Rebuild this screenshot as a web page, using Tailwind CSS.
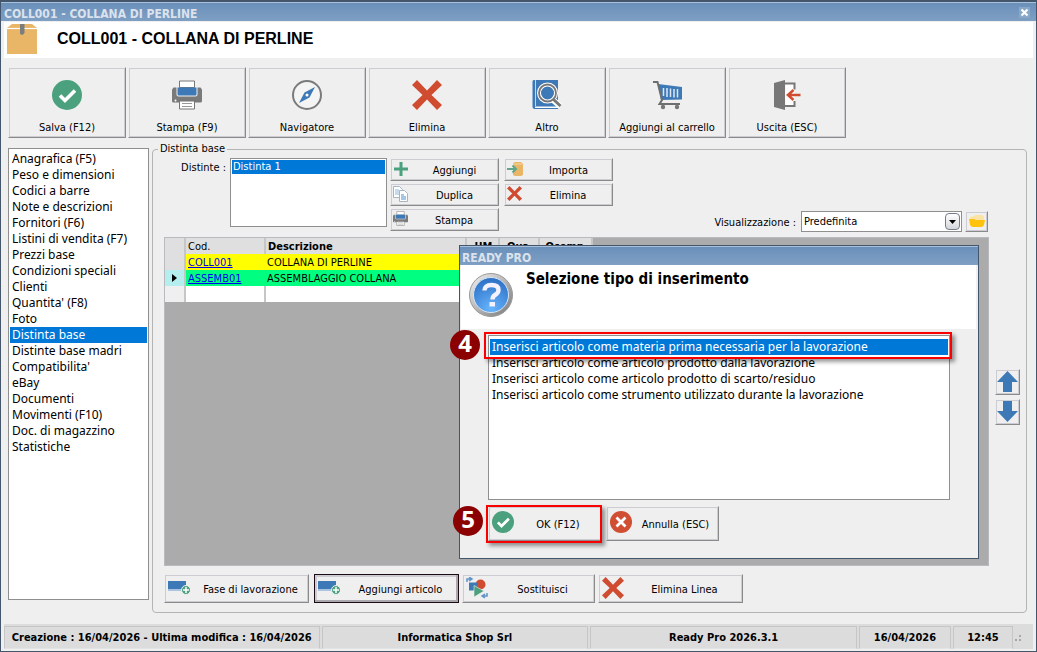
<!DOCTYPE html>
<html lang="it">
<head>
<meta charset="utf-8">
<title>COLL001 - COLLANA DI PERLINE</title>
<script src="https://cdn.jsdelivr.net/npm/@tailwindcss/browser@4"></script>
</head>
<body class="relative flex h-screen flex-col overflow-hidden border border-t-2 border-[#44566b] bg-[#efefef] font-['DejaVu_Sans_Condensed','DejaVu_Sans',sans-serif] text-[11px] leading-4 text-black">

<svg class="hidden" aria-hidden="true">
  <symbol id="check" viewBox="0 0 30 30"><circle cx="15" cy="15" r="15" fill="#4ba07e"/><path d="M8 15.500l5 5L23 10.500" fill="none" stroke="#fff" stroke-width="3.600"/></symbol>
  <symbol id="cancel" viewBox="0 0 22 22"><circle cx="11" cy="11" r="11" fill="#d04e32"/><path d="M6.500 6.500l9 9M15.500 6.500l-9 9" stroke="#fff" stroke-width="2.800"/></symbol>
  <symbol id="cross" viewBox="0 0 30 30"><path d="M5 0L15 10.500 25 0l5 5-10.500 10L30 25l-5 5-10-10.500L5 30l-5-5 10.500-10L0 5z" fill="#d04c31"/></symbol>
  <symbol id="printer" viewBox="0 0 30 29"><path d="M1.500 7h27L30 9v11.500q0 1.500-1.500 1.500h-27Q0 22 0 20.500V9z" fill="#7a7a7a"/><path d="M4.500 6h21v8q0 2-2 2h-17q-2 0-2-2z" fill="#efefef"/><path d="M7.500.500h15V7h-15z" fill="#fff" stroke="#777"/><path d="M5.500 7h19v7q0 1-1 1h-17q-1 0-1-1z" fill="#3d79b7"/><path d="M7.500 20.500h15v8h-15z" fill="#fff" stroke="#777"/><path d="M10 23h10M10 26h10" stroke="#999"/><circle cx="3.500" cy="20" r="1" fill="#fff"/></symbol>
  <symbol id="step" viewBox="0 0 22 14"><path d="M0 0h18v8H0z" fill="#3d79b7"/><path d="M0 8h14v2H0z" fill="#a9c3e0"/><circle cx="18" cy="9" r="4.500" fill="#4ba07e" stroke="#efefef"/><path d="M18 6v6M15 9h6" stroke="#fff" stroke-width="1.500"/></symbol>
</svg>

<header class="flex h-[19px] shrink-0 items-center justify-between border-t border-[#a8c0dc] bg-linear-to-b from-[#6a90ba] to-[#7f9fc4] pr-1.5 pl-[3px]">
  <span class="pt-1 text-xs leading-4 font-bold text-[#dbe2ec]">COLL001 - COLLANA DI PERLINE</span>
  <button aria-label="Chiudi" class="flex size-[11px] items-center justify-center bg-[#89a8c9]"><svg class="size-[9px]" viewBox="0 0 9 9"><path d="M1.500 1.500l6 6M7.500 1.500l-6 6" stroke="#fff" stroke-width="2.200"/></svg></button>
</header>

<div class="mx-[3px] mt-px flex h-9 shrink-0 gap-5 bg-white pl-[3px]">
  <svg class="mt-0.5 h-[30px] w-[30px]" viewBox="0 0 30 30"><path d="M5 0h20l5 4v26H0V4z" fill="#e9b566"/><path d="M0 4.500h30" stroke="#fff" stroke-width="1.200"/><path d="M13 0h4.500v9l-2 2-2.500-1z" fill="#7d7d7d"/></svg>
  <h1 class="pt-[5px] font-['Liberation_Sans',Arial,sans-serif] text-base leading-6 font-bold">COLL001 - COLLANA DI PERLINE</h1>
</div>

<nav class="flex shrink-0 gap-0.5 px-[7px] pt-[9px]">
  <button class="flex h-[71px] w-[118px] flex-col items-center justify-between border border-t-[#efefef] border-r-[#8a8a8a] border-b-[#8a8a8a] border-l-[#efefef] pt-3 pb-px shadow-[inset_0_0_0_1px_#ccccd2]"><svg class="size-[30px]"><use href="#check"/></svg>Salva (F12)</button>
  <button class="flex h-[71px] w-[118px] flex-col items-center justify-between border border-t-[#efefef] border-r-[#8a8a8a] border-b-[#8a8a8a] border-l-[#efefef] pt-3 pb-px shadow-[inset_0_0_0_1px_#ccccd2]"><svg class="size-[30px]"><use href="#printer"/></svg>Stampa (F9)</button>
  <button class="flex h-[71px] w-[118px] flex-col items-center justify-between border border-t-[#efefef] border-r-[#8a8a8a] border-b-[#8a8a8a] border-l-[#efefef] pt-3 pb-px shadow-[inset_0_0_0_1px_#ccccd2]"><svg class="size-[30px]" viewBox="0 0 30 30"><circle cx="15" cy="15" r="14" fill="#f4f4f4" stroke="#7b7b7b" stroke-width="2"/><path d="M23 7l-5.500 10.500L7 23l5.500-10.500z" fill="#3d79b7"/><circle cx="15" cy="15" r="1.500" fill="#fff"/></svg>Navigatore</button>
  <button class="flex h-[71px] w-[118px] flex-col items-center justify-between border border-t-[#efefef] border-r-[#8a8a8a] border-b-[#8a8a8a] border-l-[#efefef] pt-3 pb-px shadow-[inset_0_0_0_1px_#ccccd2]"><svg class="size-[30px]"><use href="#cross"/></svg>Elimina</button>
  <button class="flex h-[71px] w-[118px] flex-col items-center justify-between border border-t-[#efefef] border-r-[#8a8a8a] border-b-[#8a8a8a] border-l-[#efefef] pt-3 pb-px shadow-[inset_0_0_0_1px_#ccccd2]"><svg class="size-[30px]" viewBox="0 0 30 30"><path d="M1.500 0H26v29H3q-2.500 0-2.500-2.500V1z" fill="#3d79b7"/><path d="M3 26.500h23v1.500H3z" fill="#fff"/><path d="M3.500 0v26" stroke="#c5d6e8"/><path d="M20 19l8 7" stroke="#fff" stroke-width="6"/><circle cx="15.500" cy="13" r="8.500" fill="#3d79b7" stroke="#fff" stroke-width="4"/><circle cx="15.500" cy="13" r="8.500" fill="none" stroke="#777" stroke-width="1.800"/><path d="M21 19l7.500 7" stroke="#777" stroke-width="3"/></svg>Altro</button>
  <button class="flex h-[71px] w-[118px] flex-col items-center justify-between border border-t-[#efefef] border-r-[#8a8a8a] border-b-[#8a8a8a] border-l-[#efefef] pt-3 pb-px shadow-[inset_0_0_0_1px_#ccccd2]"><svg class="size-[30px]" viewBox="0 0 30 30"><path d="M6 4l24 3v12.500L9 20z" fill="#3d79b7"/><path d="M11.500 8v8M15 8v9M18.500 8.500V17M22 9v8.500M25.500 9v8.500" stroke="#dce7f3" stroke-width="1.500"/><path d="M1 2h4.500L10 20 7.500 24H28" fill="none" stroke="#6e6e6e" stroke-width="2"/><circle cx="11" cy="27" r="2.200" fill="#777"/><circle cx="25" cy="27" r="2.200" fill="#777"/></svg>Aggiungi al carrello</button>
  <button class="flex h-[71px] w-[118px] flex-col items-center justify-between border border-t-[#efefef] border-r-[#8a8a8a] border-b-[#8a8a8a] border-l-[#efefef] pt-3 pb-px shadow-[inset_0_0_0_1px_#ccccd2]"><svg class="size-[30px]" viewBox="0 0 30 30"><path d="M2 3l11-3v30L2 27z" fill="#777"/><path d="M13.500 4h9v22h-9z" fill="#fff"/><path d="M13 3.500h9.500v6M22.500 21v5H13" fill="none" stroke="#777" stroke-width="2"/><path d="M28.500 15H17M21.500 10l-5.500 5 5.500 5" fill="none" stroke="#d04c31" stroke-width="2.600"/></svg>Uscita (ESC)</button>
</nav>

<main class="flex min-h-0 flex-1 gap-[3px] pr-[9px] pl-[7px]">
  <ul class="mt-2.5 mb-6 w-[141px] shrink-0 overflow-hidden border border-[#8f8f8f] bg-white px-px py-0.5 font-['Noto_Sans',sans-serif] text-xs leading-4 [&>li]:px-0.5">
    <li>Anagrafica (F5)</li><li>Peso e dimensioni</li><li>Codici a barre</li><li>Note e descrizioni</li><li>Fornitori (F6)</li><li>Listini di vendita (F7)</li><li>Prezzi base</li><li>Condizioni speciali</li><li>Clienti</li><li>Quantita' (F8)</li><li>Foto</li><li class="bg-[#0078d7] text-white">Distinta base</li><li>Distinte base madri</li><li>Compatibilita'</li><li>eBay</li><li>Documenti</li><li>Movimenti (F10)</li><li>Doc. di magazzino</li><li>Statistiche</li>
  </ul>

  <fieldset class="mt-[3px] mb-[11px] flex min-w-0 flex-1 flex-col rounded border border-[#b4b4b4] pt-px pr-1.5 pb-[9px] pl-[11px]">
    <legend class="-ml-1.5 px-0.5">Distinta base</legend>
    <div class="flex h-[74px] shrink-0">
      <span id="distinte" class="w-[66px] pt-0.5 pr-1 text-right">Distinte :</span>
      <ul aria-labelledby="distinte" class="h-[69px] w-[157px] border border-[#8f8f8f] bg-white p-px"><li class="h-[14px] bg-[#0078d7] px-px leading-[14px] text-white">Distinta 1</li></ul>
      <div class="ml-[3px] grid grid-cols-[109px_109px] content-start gap-x-[5px] gap-y-0.5">
        <button class="flex h-[23px] items-center border border-t-[#efefef] border-r-[#8a8a8a] border-b-[#8a8a8a] border-l-[#efefef] px-0.5 pt-0.5 shadow-[inset_0_0_0_1px_#ccccd2]"><svg class="-mt-1 size-4 shrink-0" viewBox="0 0 16 16"><path d="M8 1v14M1 8h14" stroke="#4ba07e" stroke-width="3"/></svg><span class="flex-1 pl-1">Aggiungi</span></button>
        <button class="flex h-[23px] items-center border border-t-[#efefef] border-r-[#8a8a8a] border-b-[#8a8a8a] border-l-[#efefef] px-0.5 pt-0.5 shadow-[inset_0_0_0_1px_#ccccd2]"><svg class="-mt-1 size-4 shrink-0" viewBox="0 0 16 16"><path d="M6 2l2-1h6l2 2v11l-2 1H8l-2-1z" fill="#e9b566"/><path d="M6 3h9" stroke="#f6d9a8"/><path d="M0 8h8M5.500 4.500L9 8l-3.500 3.500" fill="none" stroke="#5fa68a" stroke-width="2"/></svg><span class="flex-1 pl-1">Importa</span></button>
        <button class="flex h-[23px] items-center border border-t-[#efefef] border-r-[#8a8a8a] border-b-[#8a8a8a] border-l-[#efefef] px-0.5 pt-0.5 shadow-[inset_0_0_0_1px_#ccccd2]"><svg class="-mt-1 size-4 shrink-0" viewBox="0 0 16 16"><path d="M.500.500h6l3 3v8h-9z" fill="#fff" stroke="#a6b4c4"/><path d="M2 4h4M2 6h4M2 8h4" stroke="#8fb4dc"/><path d="M6.500 4.500h5l3 3v8h-8z" fill="#fff" stroke="#a6b4c4"/><path d="M8 8h3v2h2v4H8z" fill="#a8c6e6"/></svg><span class="flex-1 pl-1">Duplica</span></button>
        <button class="flex h-[23px] items-center border border-t-[#efefef] border-r-[#8a8a8a] border-b-[#8a8a8a] border-l-[#efefef] px-0.5 pt-0.5 shadow-[inset_0_0_0_1px_#ccccd2]"><svg class="-mt-1 size-[15px] shrink-0"><use href="#cross"/></svg><span class="flex-1 pl-1">Elimina</span></button>
        <button class="flex h-[23px] items-center border border-t-[#efefef] border-r-[#8a8a8a] border-b-[#8a8a8a] border-l-[#efefef] px-0.5 pt-0.5 shadow-[inset_0_0_0_1px_#ccccd2]"><svg class="-mt-1 size-[15px] shrink-0"><use href="#printer"/></svg><span class="flex-1 pl-1">Stampa</span></button>
      </div>
      <div class="ml-auto flex items-end pr-8">
        <label for="vis" class="pr-[5px] pb-px">Visualizzazione :</label>
        <div class="relative">
          <select id="vis" class="block h-[21px] w-[161px] appearance-none border border-[#8f8f8f] bg-white px-0.5"><option>Predefinita</option></select>
          <span class="pointer-events-none absolute top-0.5 right-0.5 flex h-[17px] w-[15px] items-center justify-center rounded-sm border border-[#777c88] bg-linear-to-b from-white to-[#d4d6dc]"><svg class="h-1 w-[7px]" viewBox="0 0 7 4"><path d="M0 0h7L3.500 4z"/></svg></span>
        </div>
        <button aria-label="Apri" class="ml-[3px] flex h-[21px] w-[23px] justify-center border border-t-[#efefef] border-r-[#8a8a8a] border-b-[#8a8a8a] border-l-[#efefef] pt-[3px] shadow-[inset_0_0_0_1px_#ccccd2]"><svg class="h-3 w-4" viewBox="0 0 16 12"><path d="M1 2l4-1 1-1h7l2 2v5H1z" fill="#fbe3a6"/><path d="M0 4h5l2 1h9l-1 5q-1 2-3 2H4q-2 0-3-2z" fill="#ffc20e"/></svg></button>
      </div>
    </div>

    <div class="mt-[5px] flex min-h-0 flex-1 gap-1.5">
      <div class="min-w-0 flex-1 overflow-hidden border border-[#b9b9be] bg-[#ababab]">
        <table class="w-[427px] table-fixed border-collapse text-left leading-[15px] [&_td]:p-0 [&_td]:pl-0.5 [&_th]:border-r-2 [&_th]:border-[#c6c6c6] [&_th]:bg-[#dfdfdf] [&_th]:p-0 [&_th]:pl-0.5">
          <colgroup><col class="w-5"><col class="w-20"><col class="w-[201px]"><col class="w-[33px]"><col class="w-[40px]"><col class="w-[53px]"></colgroup>
          <thead><tr class="h-4"><th></th><th class="font-normal">Cod.</th><th>Descrizione</th><th class="text-center">UM</th><th class="text-center">Qua.</th><th class="text-center">Ocomp.</th></tr></thead>
          <tbody>
            <tr class="h-4 bg-[#ffff00]"><th></th><td><a href="#" class="text-[#0000ee] underline">COLL001</a></td><td colspan="4">COLLANA DI PERLINE</td></tr>
            <tr class="h-4 bg-[#00ff80]"><td class="border-r-2 border-[#c6c6c6] bg-[#b4eeee]"><svg class="ml-[5px] h-2 w-[5px]" viewBox="0 0 5 8"><path d="M0 0l5 4-5 4z"/></svg></td><td><a href="#" class="text-[#0000ee] underline">ASSEMB01</a></td><td colspan="4">ASSEMBLAGGIO COLLANA</td></tr>
            <tr class="h-4 bg-white"><td class="border-r-2 border-[#c6c6c6] bg-[#efefef]"></td><td class="border-r-2 border-[#c6c6c6]"></td><td colspan="4"></td></tr>
          </tbody>
        </table>
      </div>
      <div class="flex w-[25px] flex-col justify-center gap-1 pb-2.5 [&>button]:flex [&>button]:h-[26px] [&>button]:items-center [&>button]:justify-center">
        <button aria-label="Sposta su" class="border border-t-[#efefef] border-r-[#8a8a8a] border-b-[#8a8a8a] border-l-[#efefef] shadow-[inset_0_0_0_1px_#ccccd2]"><svg class="h-[21px] w-[21px]" viewBox="0 0 21 21"><path d="M10.500 0L21 11h-6v10H6V11H0z" fill="#3d79b7"/></svg></button>
        <button aria-label="Sposta giù" class="border border-t-[#efefef] border-r-[#8a8a8a] border-b-[#8a8a8a] border-l-[#efefef] shadow-[inset_0_0_0_1px_#ccccd2]"><svg class="h-[21px] w-[21px]" viewBox="0 0 21 21"><path d="M10.500 21L21 10h-6V0H6v10H0z" fill="#3d79b7"/></svg></button>
      </div>
    </div>

    <div class="mt-2 flex shrink-0 gap-[3px]">
      <button class="mr-0.5 flex h-[29px] w-[145px] items-center border border-t-[#efefef] border-r-[#8a8a8a] border-b-[#8a8a8a] border-l-[#efefef] px-[3px] pt-0.5 shadow-[inset_0_0_0_1px_#ccccd2]"><svg class="-mt-1 h-3.5 w-[22px] shrink-0"><use href="#step"/></svg><span class="flex-1 pl-1.5">Fase di lavorazione</span></button>
      <button class="flex h-[29px] w-[145px] items-center border border-[#1c0b14] px-[3px] pt-0.5 shadow-[inset_-1px_-1px_0_1px_#a9a9ad,inset_1px_1px_0_1px_#ccccd2]"><svg class="-mt-1 h-3.5 w-[22px] shrink-0"><use href="#step"/></svg><span class="flex-1 pl-1.5">Aggiungi articolo</span></button>
      <button class="flex h-[29px] w-[133px] items-center border border-t-[#efefef] border-r-[#8a8a8a] border-b-[#8a8a8a] border-l-[#efefef] px-[3px] pt-0.5 shadow-[inset_0_0_0_1px_#ccccd2]"><svg class="-mt-1 size-[22px] shrink-0" viewBox="0 0 22 22"><circle cx="14.500" cy="7.500" r="5" fill="#d04c31"/><path d="M3 5.500h8v8H3z" fill="#3d79b7"/><path d="M8 8.500l10 5.500-10 6z" fill="#4ba07e" stroke="#efefef" stroke-width=".600"/><path d="M1 5V2h4M3 0l3 2-3 2M21 16v3h-4M19 17l-3 2 3 2" fill="none" stroke="#5e92c8" stroke-width="1.500"/></svg><span class="flex-1 pl-1.5">Sostituisci</span></button>
      <button class="flex h-[29px] w-[145px] items-center border border-t-[#efefef] border-r-[#8a8a8a] border-b-[#8a8a8a] border-l-[#efefef] px-[3px] pt-0.5 shadow-[inset_0_0_0_1px_#ccccd2]"><svg class="-mt-1 size-[22px] shrink-0"><use href="#cross"/></svg><span class="flex-1 pl-1.5">Elimina Linea</span></button>
    </div>
  </fieldset>
</main>

<footer class="mx-[3px] mb-0.5 grid h-[25px] shrink-0 grid-cols-[317fr_268fr_268fr_92px_60px_18px] gap-0.5 bg-[#dcdcdc] pt-0.5 text-center leading-[21px] font-bold [&>span]:border [&>span]:border-[#c6c6c8] [&>span]:border-b-[#e4e4e4]">
  <span class="overflow-hidden whitespace-nowrap">Creazione : 16/04/2026 - Ultima modifica : 16/04/2026</span><span>Informatica Shop Srl</span><span>Ready Pro 2026.3.1</span><span>16/04/2026</span><span>12:45</span>
  <svg class="mt-2 size-2" viewBox="0 0 8 8"><path d="M4 1h2v2H4zM0 5h2v2H0zM4 5h2v2H4z" fill="#a8a8a8"/></svg>
</footer>

<!-- Modal window -->
<section role="dialog" aria-labelledby="dlg" class="absolute top-[243px] left-[458px] flex h-[314px] w-[520px] flex-col border border-[#44566b] bg-[#efefef]">
  <div class="flex h-[19px] shrink-0 items-center border-t border-[#a8c0dc] bg-linear-to-b from-[#6a90ba] to-[#7f9fc4] pt-1 pl-0.5 text-xs leading-4 font-bold text-[#dbe2ec]">READY PRO</div>
  <div class="mr-0.5 ml-px flex h-16 shrink-0 gap-3 bg-white pl-2">
    <svg class="mt-2 size-11" viewBox="0 0 44 44"><defs><radialGradient id="blue" cx=".5" cy=".9" r=".9"><stop offset="0" stop-color="#67b5ff"/><stop offset="1" stop-color="#2c6fc4"/></radialGradient><linearGradient id="rim" x2="1" y2="1"><stop stop-color="#f4f4f4"/><stop offset="1" stop-color="#777"/></linearGradient></defs><circle cx="22" cy="22" r="21.500" fill="url(#rim)" stroke="#999"/><circle cx="22" cy="22" r="17.500" fill="url(#blue)" stroke="#d8e6f5"/><path d="M15.500 17.500q0-5.500 7-5.500t7 5q0 3-3.500 5-2.500 1.500-2.500 4.500" fill="none" stroke="#f4f2ff" stroke-width="4.400"/><path d="M20.500 29h5.500v4.500h-5.500z" fill="#f4f2ff"/></svg>
    <h2 id="dlg" class="pt-1 pl-px text-[15px] leading-5 font-bold">Selezione tipo di inserimento</h2>
  </div>
  <ul class="mx-7 mt-1.5 h-[165px] border border-[#8f8f8f] bg-white px-px pt-[3px] font-['Noto_Sans',sans-serif] text-xs leading-4 whitespace-nowrap [&>li]:px-0.5">
    <li class="bg-[#0078d7] text-white">Inserisci articolo come materia prima necessaria per la lavorazione</li><li>Inserisci articolo come articolo prodotto dalla lavorazione</li><li>Inserisci articolo come articolo prodotto di scarto/residuo</li><li>Inserisci articolo come strumento utilizzato durante la lavorazione</li>
  </ul>
  <div class="mt-1.5 flex gap-1 pl-7">
    <button class="flex h-[35px] w-[114px] items-center border border-t-[#efefef] border-r-[#8a8a8a] border-b-[#8a8a8a] border-l-[#efefef] px-[3px] pt-0.5 shadow-[inset_0_0_0_1px_#ccccd2]"><svg class="-mt-1.5 size-[22px] shrink-0"><use href="#check"/></svg><span class="flex-1 pl-1">OK (F12)</span></button>
    <button class="flex h-[35px] w-[113px] items-center border border-t-[#efefef] border-r-[#8a8a8a] border-b-[#8a8a8a] border-l-[#efefef] px-[3px] pt-0.5 shadow-[inset_0_0_0_1px_#ccccd2]"><svg class="-mt-1.5 size-[22px] shrink-0"><use href="#cancel"/></svg><span class="flex-1 pl-1">Annulla (ESC)</span></button>
  </div>
  <!-- Step callouts -->
  <div class="pointer-events-none absolute top-[86px] left-6 h-[27px] w-[468px] border-2 border-[#fb0000] shadow-[3px_3px_4px_rgba(0,0,0,0.4)]"></div>
  <div class="pointer-events-none absolute top-[259px] left-[26px] h-[38px] w-[116px] border-2 border-[#fb0000] shadow-[3px_3px_4px_rgba(0,0,0,0.4)]"></div>
  <span class="absolute top-[84px] -left-2.5 flex size-[30px] items-center justify-center rounded-full bg-[#8b0000] pb-1 font-['Open_Sans',sans-serif] text-2xl font-bold text-white">4</span>
  <span class="absolute top-[260px] -left-[7px] flex size-[30px] items-center justify-center rounded-full bg-[#8b0000] pb-1 font-['Open_Sans',sans-serif] text-2xl font-bold text-white">5</span>
</section>
</body>
</html>
